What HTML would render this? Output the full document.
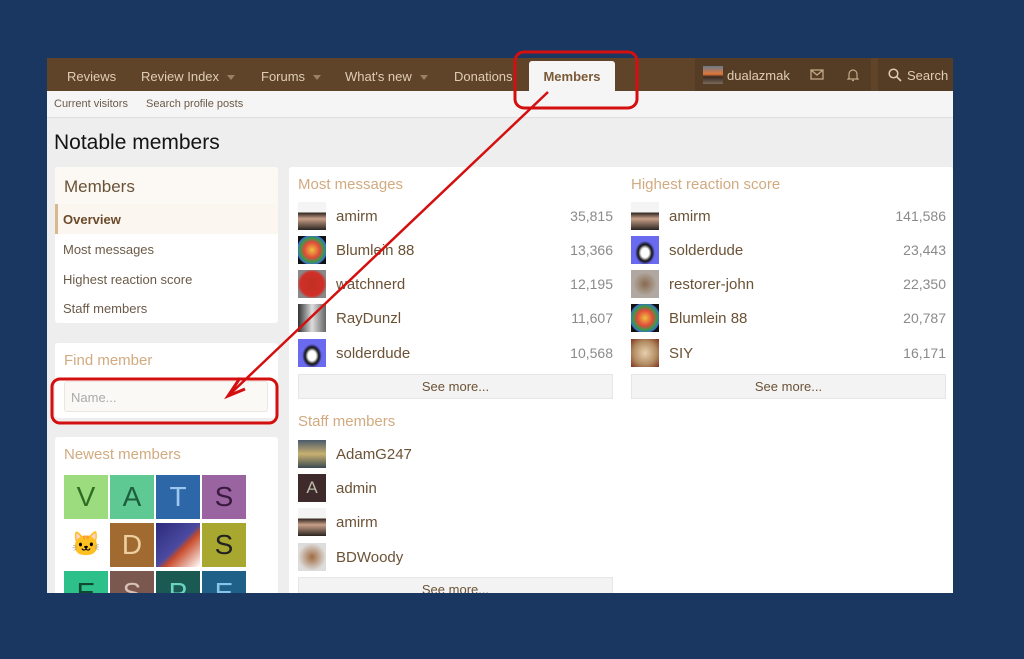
<!DOCTYPE html>
<html><head><meta charset="utf-8"><style>
*{margin:0;padding:0;box-sizing:border-box}
body{width:1024px;height:659px;background:#1a3761;position:relative;overflow:hidden;font-family:"Liberation Sans","DejaVu Sans",sans-serif}
.a{position:absolute}
#page{left:47px;top:58px;width:906px;height:535px;background:#eeeeee;overflow:hidden}
.nav{left:0;top:0;width:906px;height:33px;background:#5f4429}
.nv{color:#e0cdb5;font-size:13px;top:11px}
.caret{display:inline-block;width:0;height:0;border-left:4px solid transparent;border-right:4px solid transparent;border-top:5px solid #9a8068;vertical-align:middle;margin-left:8px}
.sub{left:0;top:33px;width:906px;height:27px;background:#f5f5f5;border-bottom:1px solid #e0e0e0}
.sv{font-size:11px;color:#6b5a48;top:7px}
.blk{background:#fff;border-radius:3px}
.hd{color:#d2aa80;font-size:15px}
.nm{color:#6b5236;font-size:15px}
.num{color:#8a8a8a;font-size:14px;text-align:right}
.av{width:28px;height:28px}
.btn{background:#f3f3f3;border:1px solid #e6e6e6;color:#6b5236;font-size:13px;text-align:center;height:25px;line-height:23px}
.tile{width:44px;height:44px;font-size:28px;text-align:center;line-height:44px;font-family:"Liberation Sans",sans-serif}
.mi{font-size:13px;color:#6b5a48;left:8px}
</style></head><body>
<div id="page" class="a">
 <div class="a nav"></div>
 <div class="a nv" style="left:20px">Reviews</div>
 <div class="a nv" style="left:94px">Review Index<span class="caret"></span></div>
 <div class="a nv" style="left:214px">Forums<span class="caret"></span></div>
 <div class="a nv" style="left:298px">What's new<span class="caret"></span></div>
 <div class="a nv" style="left:407px">Donations</div>
 <div class="a" style="left:482px;top:3px;width:86px;height:30px;background:#f5f5f5;border-radius:3px 3px 0 0"></div>
 <div class="a" style="left:482px;top:11px;width:86px;text-align:center;font-weight:bold;font-size:13px;color:#7a5a36">Members</div>
 <div class="a" style="left:648px;top:0;width:176px;height:33px;background:#553c24"></div>
 <div class="a" style="left:656px;top:8px;width:20px;height:18px;background:linear-gradient(#6b7a8c,#e0783a 45%,#3a2a20 60%,#7a6a5a)"></div>
 <div class="a nv" style="left:680px;top:10px;font-size:13px">dualazmak</div>
 <svg class="a" style="left:763px;top:11px" width="14" height="11" viewBox="0 0 14 11"><rect x="1" y="1" width="12" height="9" fill="none" stroke="#c4a888" stroke-width="1.3"/><path d="M1 1 L7 6 L13 1" fill="none" stroke="#c4a888" stroke-width="1.3"/></svg>
 <svg class="a" style="left:800px;top:10px" width="12" height="14" viewBox="0 0 12 14"><path d="M2 10 V6 A4 4 0 0 1 10 6 V10 L11 11 H1 Z M5 12.5 H7" fill="none" stroke="#c4a888" stroke-width="1.2"/></svg>
 <div class="a" style="left:831px;top:0;width:75px;height:33px;background:#553c24"></div>
 <svg class="a" style="left:841px;top:10px" width="14" height="14" viewBox="0 0 14 14"><circle cx="5.5" cy="5.5" r="4.3" fill="none" stroke="#e0cdb5" stroke-width="1.5"/><path d="M8.7 8.7 L13 13" stroke="#e0cdb5" stroke-width="1.6"/></svg>
 <div class="a nv" style="left:860px;top:10px">Search</div>
 <div class="a sub"></div>
 <div class="a sv" style="left:7px;top:40px">Current visitors</div>
 <div class="a sv" style="left:99px;top:40px">Search profile posts</div>
 <div class="a" style="left:7px;top:73px;font-size:21px;color:#141414">Notable members</div>

 <div class="a blk" style="left:8px;top:109px;width:223px;height:156px;overflow:hidden">
  <div class="a" style="left:0;top:0;width:223px;height:37px;background:#fcf9f5"></div>
  <div class="a" style="left:9px;top:10px;font-size:17px;color:#6b5236">Members</div>
  <div class="a" style="left:0;top:37px;width:223px;height:30px;background:#fbf6ef;border-left:3px solid #d9b88f"></div>
  <div class="a mi" style="top:45px;font-weight:bold;color:#6b4a2a">Overview</div>
  <div class="a mi" style="top:75px">Most messages</div>
  <div class="a mi" style="top:105px">Highest reaction score</div>
  <div class="a mi" style="top:134px">Staff members</div>
 </div>
 <div class="a blk" style="left:8px;top:285px;width:223px;height:75px">
  <div class="a hd" style="left:9px;top:9px">Find member</div>
  <div class="a" style="left:9px;top:38px;width:204px;height:31px;background:#fbf9f6;border:1px solid #ece6de;border-radius:3px;font-size:13px;color:#aaa;padding:8px 6px">Name...</div>
 </div>
 <div class="a blk" style="left:8px;top:379px;width:223px;height:170px">
  <div class="a hd" style="left:9px;top:9px">Newest members</div>
 </div>
 <div class="a tile" style="left:17px;top:417px;background:#9ddc7e;color:#2e6e22">V</div>
 <div class="a tile" style="left:63px;top:417px;background:#5fc994;color:#1e5e3c">A</div>
 <div class="a tile" style="left:109px;top:417px;background:#2e67a8;color:#9cc8ef">T</div>
 <div class="a tile" style="left:155px;top:417px;background:#9a64a0;color:#3a1a40">S</div>
 <div class="a tile" style="left:17px;top:465px;background:#fff;font-size:24px">🐱</div>
 <div class="a tile" style="left:63px;top:465px;background:#a06a30;color:#eecfa0">D</div>
 <div class="a tile" style="left:109px;top:465px;background:linear-gradient(135deg,#2c2a7a,#4a4aa0 50%,#c84a2a 60%,#fff)"></div>
 <div class="a tile" style="left:155px;top:465px;background:#a8a830;color:#222">S</div>
 <div class="a tile" style="left:17px;top:513px;background:#2ec08a;color:#0e4a30">E</div>
 <div class="a tile" style="left:63px;top:513px;background:#7a5850;color:#d8c0b8">S</div>
 <div class="a tile" style="left:109px;top:513px;background:#1a5a52;color:#6ad4c0">P</div>
 <div class="a tile" style="left:155px;top:513px;background:#1e6088;color:#88c4e8">E</div>

 <div class="a blk" style="left:242px;top:109px;width:664px;height:440px"></div>
 <div class="a hd" style="left:251px;top:118px">Most messages</div>
 <div class="a hd" style="left:584px;top:118px">Highest reaction score</div>
 <div class="a hd" style="left:251px;top:355px">Staff members</div>

 <div class="a av" style="left:251px;top:144px;background:linear-gradient(#f4f4f4 35%,#3a2e28 40%,#c8a088 60%,#2a2420)"></div>
 <div class="a nm" style="left:289px;top:150px">amirm</div><div class="a num" style="left:466px;top:150px;width:100px">35,815</div>
 <div class="a av" style="left:251px;top:178px;background:radial-gradient(circle,#f0c040,#e04a3a 40%,#3a9a4a 60%,#3a6ad0 75%,#111 78%)"></div>
 <div class="a nm" style="left:289px;top:184px">Blumlein 88</div><div class="a num" style="left:466px;top:184px;width:100px">13,366</div>
 <div class="a av" style="left:251px;top:212px;background:radial-gradient(circle,#c03020,#d03028 60%,#888 75%)"></div>
 <div class="a nm" style="left:289px;top:218px">watchnerd</div><div class="a num" style="left:466px;top:218px;width:100px">12,195</div>
 <div class="a av" style="left:251px;top:246px;background:linear-gradient(90deg,#333,#ddd 50%,#666)"></div>
 <div class="a nm" style="left:289px;top:252px">RayDunzl</div><div class="a num" style="left:466px;top:252px;width:100px">11,607</div>
 <div class="a av" style="left:251px;top:281px;background:radial-gradient(ellipse at 50% 60%,#fff 20%,#111 35%,#6a6af0 50%)"></div>
 <div class="a nm" style="left:289px;top:287px">solderdude</div><div class="a num" style="left:466px;top:287px;width:100px">10,568</div>
 <div class="a btn" style="left:251px;top:316px;width:315px">See more...</div>

 <div class="a av" style="left:584px;top:144px;background:linear-gradient(#f4f4f4 35%,#3a2e28 40%,#c8a088 60%,#2a2420)"></div>
 <div class="a nm" style="left:622px;top:150px">amirm</div><div class="a num" style="left:799px;top:150px;width:100px">141,586</div>
 <div class="a av" style="left:584px;top:178px;background:radial-gradient(ellipse at 50% 60%,#fff 20%,#111 35%,#6a6af0 50%)"></div>
 <div class="a nm" style="left:622px;top:184px">solderdude</div><div class="a num" style="left:799px;top:184px;width:100px">23,443</div>
 <div class="a av" style="left:584px;top:212px;background:radial-gradient(circle,#8a6a50,#b0a8a0 60%)"></div>
 <div class="a nm" style="left:622px;top:218px">restorer-john</div><div class="a num" style="left:799px;top:218px;width:100px">22,350</div>
 <div class="a av" style="left:584px;top:246px;background:radial-gradient(circle,#f0c040,#e04a3a 40%,#3a9a4a 60%,#3a6ad0 75%,#111 78%)"></div>
 <div class="a nm" style="left:622px;top:252px">Blumlein 88</div><div class="a num" style="left:799px;top:252px;width:100px">20,787</div>
 <div class="a av" style="left:584px;top:281px;background:radial-gradient(circle,#e8d0b0,#b08a60 60%,#803020)"></div>
 <div class="a nm" style="left:622px;top:287px">SIY</div><div class="a num" style="left:799px;top:287px;width:100px">16,171</div>
 <div class="a btn" style="left:584px;top:316px;width:315px">See more...</div>

 <div class="a av" style="left:251px;top:382px;background:linear-gradient(#4a5a6a,#c8b070 50%,#3a4a50)"></div>
 <div class="a nm" style="left:289px;top:388px">AdamG247</div>
 <div class="a av" style="left:251px;top:416px;background:#3e2a2a;color:#bba;font-size:17px;text-align:center;line-height:28px">A</div>
 <div class="a nm" style="left:289px;top:422px">admin</div>
 <div class="a av" style="left:251px;top:450px;background:linear-gradient(#f4f4f4 35%,#3a2e28 40%,#c8a088 60%,#2a2420)"></div>
 <div class="a nm" style="left:289px;top:456px">amirm</div>
 <div class="a av" style="left:251px;top:485px;background:radial-gradient(circle,#a06a40,#ddd 70%)"></div>
 <div class="a nm" style="left:289px;top:491px">BDWoody</div>
 <div class="a btn" style="left:251px;top:519px;width:315px">See more...</div>
</div>

<svg class="a" style="left:0;top:0" width="1024" height="659">
 <rect x="515" y="52" width="122" height="56" rx="9" fill="none" stroke="#d40f0f" stroke-width="3"/>
 <rect x="52" y="379" width="225" height="44" rx="8" fill="none" stroke="#d40f0f" stroke-width="3"/>
 <path d="M548 92 L228 396" stroke="#d40f0f" stroke-width="2.5"/>
 <path d="M240 378 L228 396 L245 389" fill="none" stroke="#d40f0f" stroke-width="3"/>
</svg>
</body></html>
